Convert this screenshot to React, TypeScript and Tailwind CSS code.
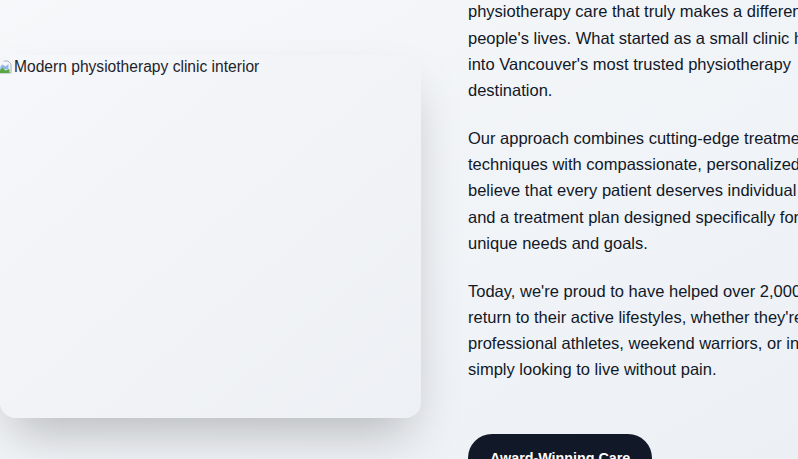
import React from 'react';

const BrokenImage: React.FC = () => (
  <svg width="16" height="16" viewBox="0 0 16 16" className="inline-block shrink-0 -ml-[2px]">
    <path d="M1 2h9l3 3v9H1z" fill="#f4f6f8" stroke="#a9b2bc" strokeWidth="1" />
    <path d="M1.5 8l3-2.5 3 2 3-2.5v5.5h-9z" fill="#8fb7e6" />
    <path d="M1.5 14v-3l3-2 3 2.5 4-1.5v4z" fill="#58a641" />
  </svg>
);

const App: React.FC = () => {
  return (
    <div
      className="w-full h-[459px] overflow-hidden bg-gradient-to-br from-[#f6f8fa] to-[#ecf0f5] text-[#111827]"
      style={{ fontFamily: '"Liberation Sans", Arial, sans-serif' }}
    >
      <div className="flex gap-[47px] -mt-[28px]">
        {/* image column */}
        <div className="w-[421px] shrink-0 pt-[83px]">
          <div className="h-[363px] rounded-2xl bg-gradient-to-br from-[#f5f7fa] to-[#edf0f4] shadow-2xl overflow-hidden">
            <div className="flex items-center text-[15.6px] leading-[24px] text-[#1f2329]">
              <BrokenImage />
              <span>Modern physiotherapy clinic interior</span>
            </div>
          </div>
        </div>

        {/* text column */}
        <div className="w-[405px] shrink-0 text-[16.5px] leading-[26.25px]">
          <div className="space-y-[21.5px]">
            <p>
              We've been committed to delivering
              <br />
              physiotherapy care that truly makes a difference in people's lives. What started as a small clinic has grown
              into Vancouver's most trusted physiotherapy destination.
            </p>
            <p>
              Our approach combines cutting-edge treatment techniques with compassionate, personalized care. We
              believe that every patient deserves individual attention and a treatment plan designed specifically for
              their unique needs and goals.
            </p>
            <p>
              Today, we're proud to have helped over 2,000 patients return to their active lifestyles, whether they're
              professional athletes, weekend warriors, or individuals simply looking to live without pain.
            </p>
          </div>

          <div className="mt-[51px] flex gap-3">
            <span className="inline-flex items-center rounded-full bg-[#111827] px-[22px] py-[14px] text-[14.3px] font-bold leading-[20px] text-white">
              Award-Winning Care
            </span>
          </div>
        </div>
      </div>
    </div>
  );
};

export default App;
